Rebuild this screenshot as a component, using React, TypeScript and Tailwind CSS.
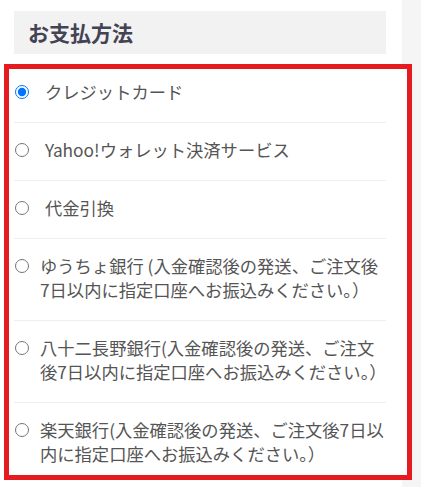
import React from "react";

const methods = [
  { label: "クレジットカード", checked: true, indent: true },
  { label: "Yahoo!ウォレット決済サービス", checked: false, indent: true },
  { label: "代金引換", checked: false, indent: true },
  { label: "ゆうちょ銀行 (入金確認後の発送、ご注文後7日以内に指定口座へお振込みください。）", checked: false, indent: false },
  { label: "八十二長野銀行(入金確認後の発送、ご注文後7日以内に指定口座へお振込みください。）", checked: false, indent: false },
  { label: "楽天銀行(入金確認後の発送、ご注文後7日以内に指定口座へお振込みください。）", checked: false, indent: false },
];

export default function App() {
  return (
    <div
      className="flex h-[487px] bg-[#f5f5f5]"
      style={{ fontFamily: '"Noto Sans CJK JP", "Noto Sans", sans-serif' }}
    >
      <div className="w-[402px] shrink-0 bg-white pt-[11px]">
        <div className="ml-[14px] flex h-[43px] w-[372px] items-center bg-[#f2f2f2] pl-[14px]">
          <h2 className="text-[21px] font-bold leading-none text-[#434354]">お支払方法</h2>
        </div>

        <div className="ml-[4px] mt-[10px] w-[408px] border-[5px] border-[#e61b1f] bg-white pl-[5px] pr-[21px]">
          {methods.map((m, i) => (
            <label
              key={m.label}
              className={
                "flex items-start border-[#eeeeee] " +
                (i === 0 ? "pt-[11px] " : "pt-[15px] ") +
                (i === methods.length - 1 ? "pb-[9px]" : "border-b pb-[18px]")
              }
            >
              <input
                type="radio"
                name="payment"
                defaultChecked={m.checked}
                className="m-0 ml-px mt-[5px] h-[14px] w-[14px] shrink-0"
              />
              <span
                className={
                  "mr-px text-[17.3px] leading-[24px] text-[#555555] " +
                  (m.indent ? "ml-[16px]" : "ml-[11px]")
                }
              >
                {m.label}
              </span>
            </label>
          ))}
        </div>
      </div>
    </div>
  );
}
